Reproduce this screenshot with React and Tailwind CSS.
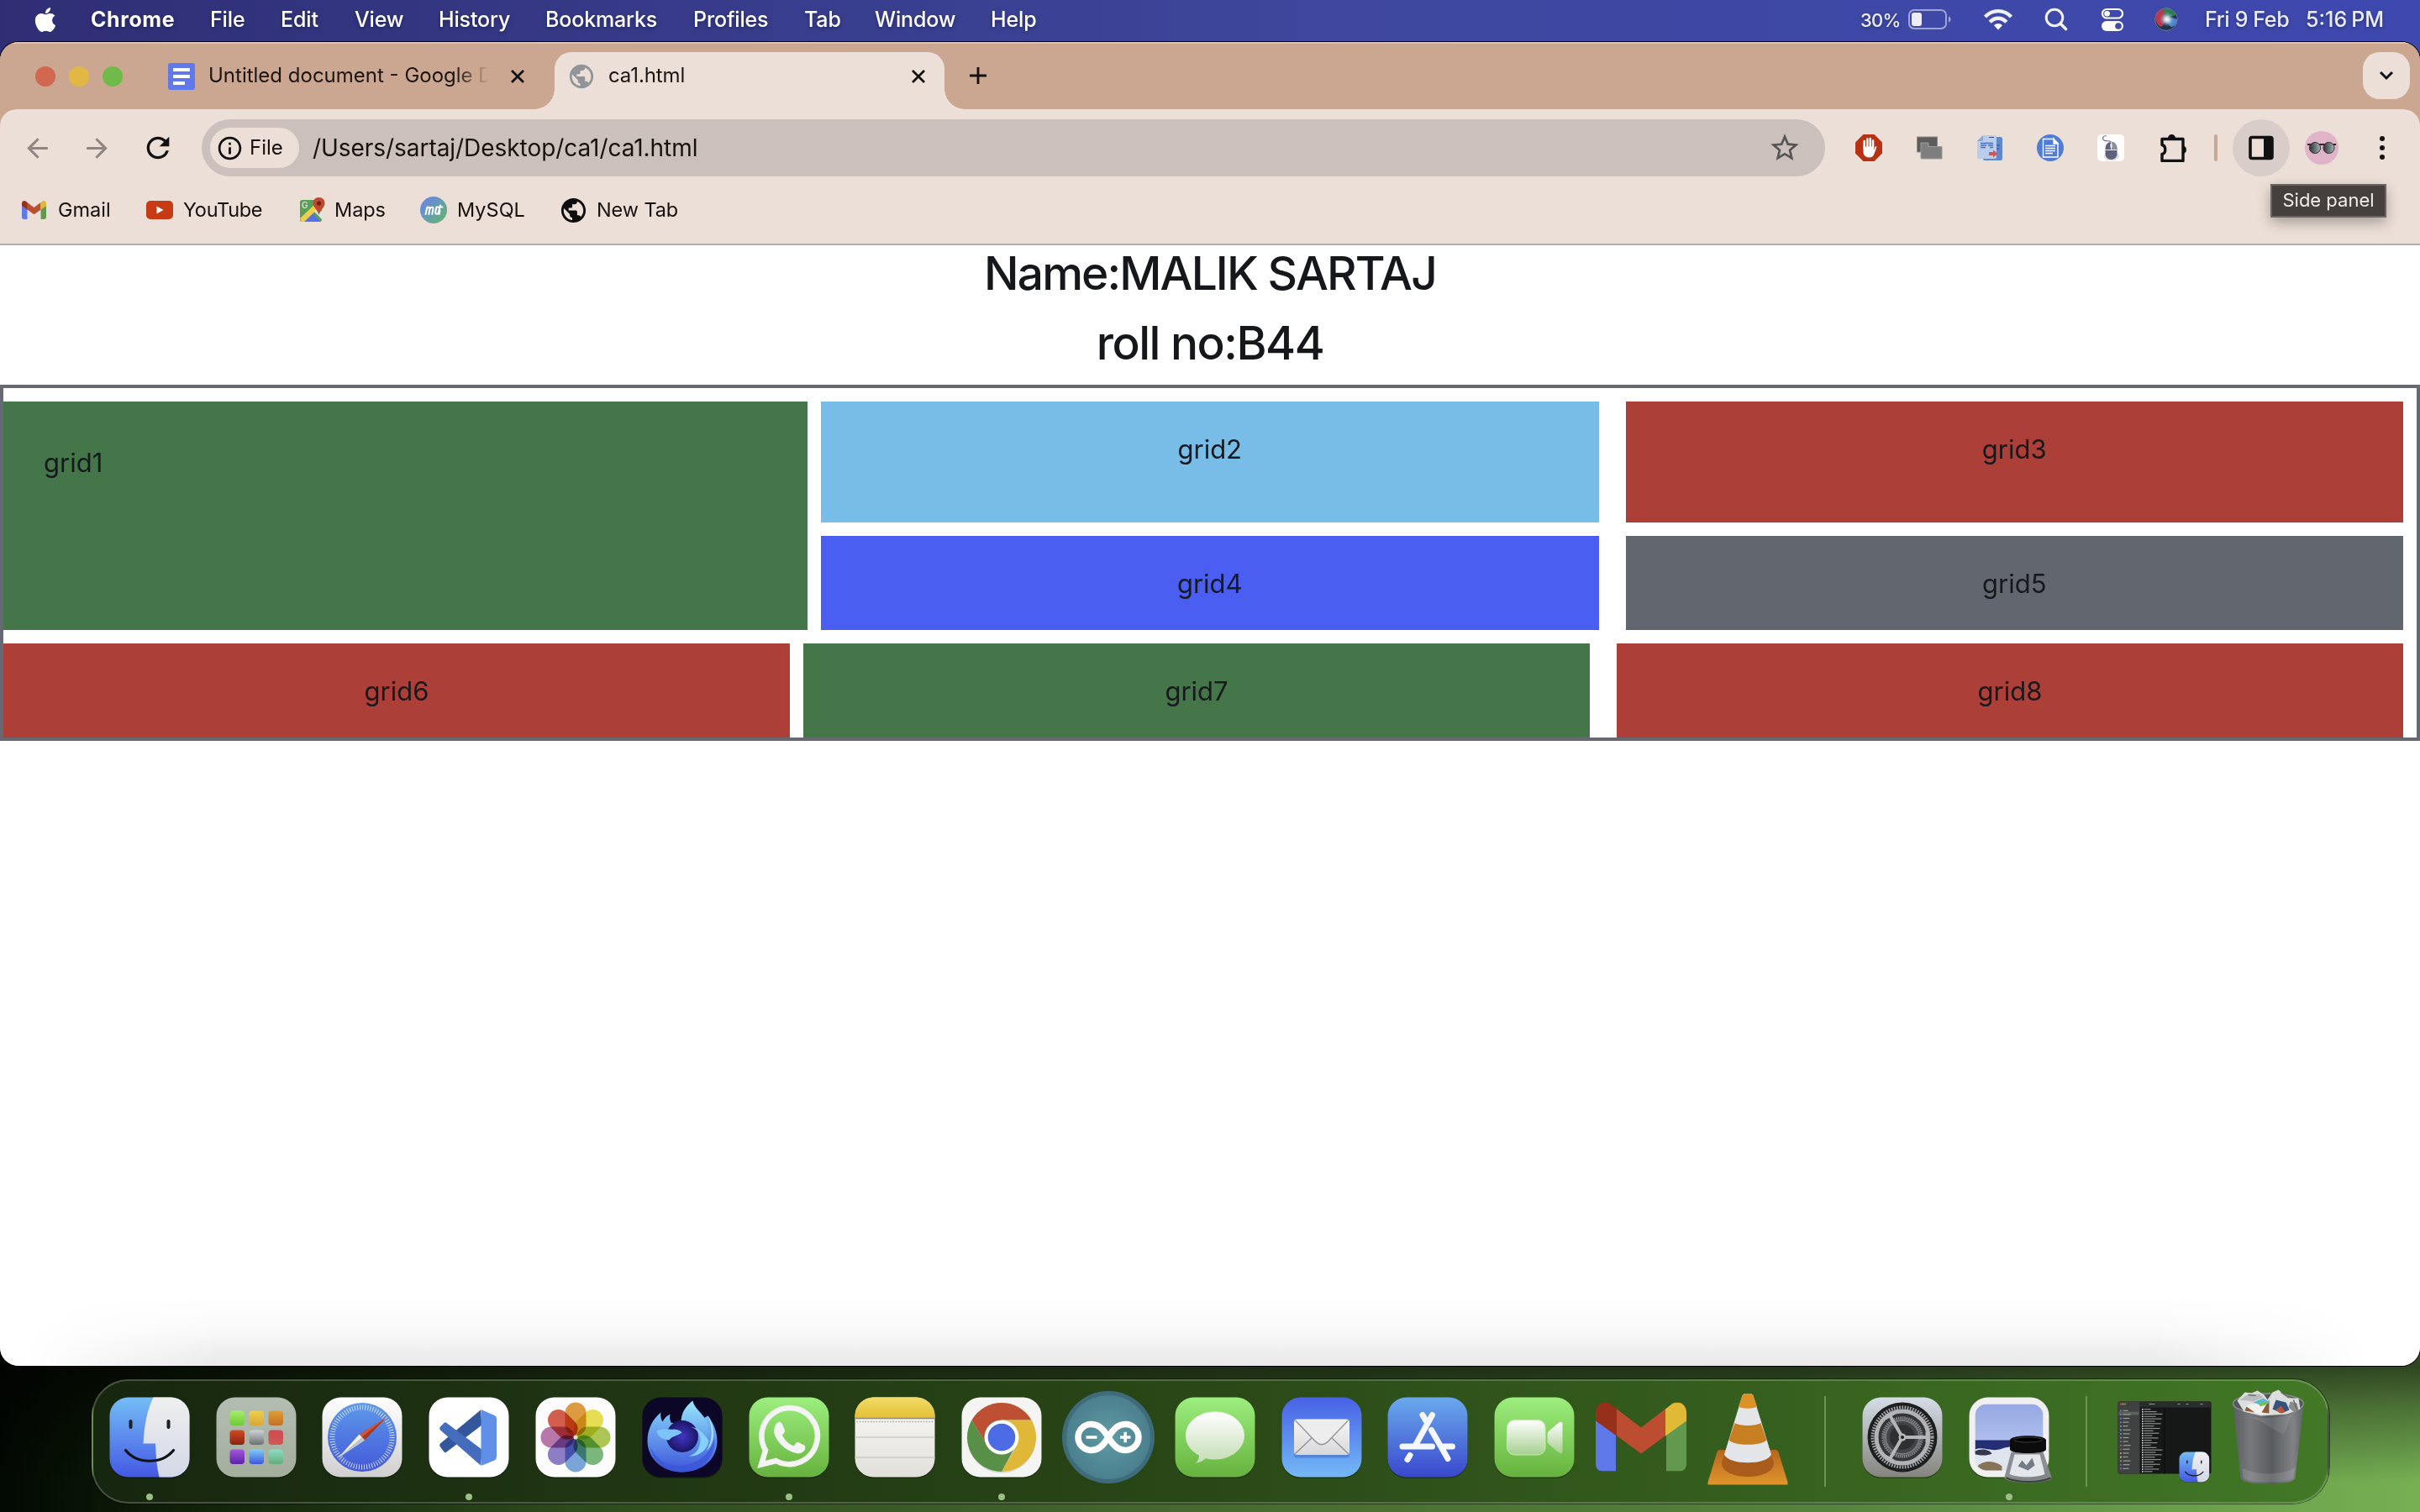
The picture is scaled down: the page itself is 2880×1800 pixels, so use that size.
import React from "react";
import { FaApple } from "react-icons/fa";
import {
  MdArrowBack,
  MdArrowForward,
  MdRefresh,
  MdInfoOutline,
  MdStarBorder,
  MdPublic,
  MdOutlineExtension,
} from "react-icons/md";

/* ---------- menu bar ---------- */

const MENUS = [
  ["File", "w-[84px]"],
  ["Edit", "w-[88px]"],
  ["View", "w-[100px]"],
  ["History", "w-[127px]"],
  ["Bookmarks", "w-[176px]"],
  ["Profiles", "w-[132px]"],
  ["Tab", "w-[84px]"],
  ["Window", "w-[138px]"],
  ["Help", "w-[60px]"],
];

function MenuBar() {
  return (
    <header className="flex h-[49px] shrink-0 items-center pb-[3px] text-[25px] font-medium leading-none text-white [text-shadow:0_2px_4px_rgba(0,0,0,0.35)]">
      <FaApple className="ml-[39px] mr-[39px] h-[33px] w-[30px]" />
      <span className="w-[142px] font-bold tracking-[0.6px]">Chrome</span>
      {MENUS.map(([label, width]) => (
        <span key={label} className={`${width} whitespace-nowrap tracking-[-0.15px]`}>
          {label}
        </span>
      ))}
      <div className="ml-auto flex items-center text-white/90">
        <span className="w-[57px] pt-[2px] text-[22px] tracking-[-0.8px]">30%</span>
        <svg className="h-[26px] w-[52px]" viewBox="0 0 52 26" fill="none">
          <rect x="1" y="2" width="44" height="22" rx="6" stroke="white" strokeOpacity=".5" strokeWidth="2" />
          <rect x="4" y="5" width="12" height="16" rx="3" fill="white" fillOpacity=".9" />
          <path d="M48 9.500c3.500 1 3.500 6 0 7z" fill="white" fillOpacity=".5" />
        </svg>
        <svg className="ml-[37px] h-[26px] w-[36px]" viewBox="0 0 36 26" fill="none" stroke="white" strokeOpacity=".92" strokeWidth="4.400">
          <path d="M2.500 10C11 .800 25 .800 33.500 10" />
          <path d="M8.200 16.200c5.500-6 14-6 19.600 0" />
          <path d="M18 25.500l-5-5.200c2.800-3 7.200-3 10 0z" fill="white" stroke="none" />
        </svg>
        <svg className="ml-[37px] h-[28px] w-[28px]" viewBox="0 0 28 28" fill="none" stroke="white" strokeOpacity=".92" strokeWidth="3" strokeLinecap="round">
          <circle cx="12" cy="12" r="9.800" />
          <path d="M19.500 19.500l6 6" strokeWidth="3.600" />
        </svg>
        <svg className="ml-[39px] h-[28px] w-[28px]" viewBox="0 0 28 28">
          <rect x="2" y="2" width="24" height="10.500" rx="5.250" fill="none" stroke="white" strokeWidth="2.200" />
          <circle cx="7.600" cy="7.250" r="3.300" fill="white" />
          <rect x="1" y="16" width="26" height="12" rx="6" fill="white" />
          <circle cx="21" cy="22" r="3.800" fill="#3f4ba8" />
        </svg>
        <svg className="ml-[35px] h-[30px] w-[30px]" viewBox="0 0 30 30">
          <defs>
            <radialGradient id="siri" cx=".53" cy=".5" r=".32">
              <stop offset="0" stopColor="#fff" />
              <stop offset=".35" stopColor="#d5e6f0" stopOpacity=".85" />
              <stop offset="1" stopColor="#5a8fb0" stopOpacity="0" />
            </radialGradient>
          </defs>
          <circle cx="15" cy="15" r="14" fill="#26364a" />
          <path d="M3 8c3-4 7-6 9-5l3 12-4 9C5 24 0 16 3 8z" fill="#b73a52" />
          <path d="M12 2c6-2 12 2 15 8-4 1-9 1-12 4-2-4-4-7-3-12z" fill="#2f7d54" />
          <path d="M15 15c4-2 9-2 13 0 0 6-4 9-7 9-3-2-5-5-6-9z" fill="#4d86cf" />
          <path d="M15 16c1 4 3 7 5 9-3 3-8 3-11 0z" fill="#1d3350" />
          <circle cx="15" cy="15" r="14" fill="url(#siri)" />
          <circle cx="15" cy="15" r="13.500" fill="none" stroke="#6c7ba8" />
        </svg>
        <span className="ml-[31px] w-[120px] whitespace-nowrap tracking-[-0.35px]">Fri 9 Feb</span>
        <span className="w-[136px] whitespace-nowrap">
          5:16<span className="ml-[5px]">PM</span>
        </span>
      </div>
    </header>
  );
}

/* ---------- browser ---------- */

const Cross = ({ className }) => (
  <svg className={`h-[18px] w-[18px] shrink-0 ${className}`} viewBox="0 0 18 18" stroke="#111" strokeWidth="2.800">
    <path d="M2 2l14 14M16 2L2 16" />
  </svg>
);

function TabStrip() {
  return (
    <div className="flex h-[80px] shrink-0 border-t-2 border-[#dcc3b5] bg-[#cba791]">
      <div className="flex h-[78px] items-center">
        <i className="ml-[42px] h-[24px] w-[24px] rounded-full bg-[#d1674f]" />
        <i className="ml-[16px] h-[24px] w-[24px] rounded-full bg-[#e1b843]" />
        <i className="ml-[16px] h-[24px] w-[24px] rounded-full bg-[#70ba4a]" />
        <svg className="ml-[54px] h-[32px] w-[32px]" viewBox="0 0 32 32">
          <rect width="32" height="32" rx="3" fill="#5f78ea" />
          <path d="M6 8h20M6 16h20M6 24h14" stroke="#fff" strokeWidth="4" />
        </svg>
        <span className="ml-[16px] w-[334px] whitespace-nowrap pb-[2px] text-[24px] text-[#1b1512] [mask-image:linear-gradient(to_right,black_88%,transparent_100%)]">
          Untitled document - Google D
        </span>
        <Cross className="ml-[25px]" />
      </div>
      <div className="mt-[10px] flex">
        <div className="ml-[11px] h-[68px] w-[24px] bg-[radial-gradient(circle_24px_at_0_44px,transparent_23.500px,#ecdfd7_24px)] [clip-path:inset(44px_0_0_0)]" />
        <div className="flex h-[68px] w-[464px] items-center rounded-t-[20px] bg-[#ecdfd7] pb-[10px]">
          <MdPublic className="ml-[15px] h-[34px] w-[34px] text-[#8f959a]" />
          <span className="ml-[15px] w-[360px] pb-[2px] text-[24px] tracking-[-0.1px] text-[#1b1512]">ca1.html</span>
          <Cross />
        </div>
        <div className="h-[68px] w-[24px] bg-[radial-gradient(circle_24px_at_24px_44px,transparent_23.500px,#ecdfd7_24px)] [clip-path:inset(44px_0_0_0)]" />
      </div>
      <svg className="ml-[6px] mt-[28px] h-[20px] w-[20px]" viewBox="0 0 20 20" stroke="#15110f" strokeWidth="2.800">
        <path d="M10 0v20M0 10h20" />
      </svg>
      <div className="ml-auto mr-[12px] mt-[10px] flex h-[56px] w-[56px] items-center justify-center rounded-[20px] bg-[#ecdfd7]">
        <svg className="h-[12px] w-[18px]" viewBox="0 0 18 12" fill="none" stroke="#111" strokeWidth="3">
          <path d="M2 2l7 7 7-7" />
        </svg>
      </div>
    </div>
  );
}

function Extensions() {
  return (
    <div className="flex h-[68px] items-center">
      <svg className="ml-[36px] h-[32px] w-[32px]" viewBox="0 0 32 32">
        <path d="M9.500 0h13L32 9.500v13L22.500 32h-13L0 22.500v-13z" fill="#b53213" />
        <path d="M10.700 17V8M14.300 15V5.500M17.700 15V5M21 16V7.500" stroke="#fff" strokeWidth="2.500" strokeLinecap="round" />
        <path d="M9.500 14.500h12.700v4l1-3c.6-1.800 2.600-1.500 2 .3L22.500 23c-1 3-3 4.500-6.200 4.500-4.500 0-6.800-3-6.800-7z" fill="#fff" />
      </svg>
      <svg className="ml-[41px] h-[28px] w-[31px]" viewBox="0 0 31 28">
        <rect x=".5" y="1" width="24" height="18" fill="#5c5c5c" stroke="#8b8b8b" />
        <path d="M5 8h9v4.500h16V27H5z" fill="#7e7e7e" stroke="#9c9c9c" />
      </svg>
      <svg className="ml-[41px] h-[30px] w-[30px]" viewBox="0 0 30 30">
        <rect x="7" y="2" width="23" height="28" rx="2" fill="#6089cd" />
        <path d="M7 0h14a2 2 0 012 2v24a2 2 0 01-2 2H2a2 2 0 01-2-2V7z" fill="#b9cdec" />
        <path d="M0 7L7 0v5a2 2 0 01-2 2z" fill="#86a7dc" />
        <path d="M4 9.500h15M4 12h7m2 0h6M4 14.500h6m5 0h4" stroke="#4a6fbd" strokeWidth="1.300" />
        <path d="M23 12h4m-4 4h3M14 2.500h6" stroke="#2d508f" strokeWidth="1.200" />
        <path d="M14 20h5v-2.500l5.500 4.500-5.500 4.500V24h-5z" fill="#c85a59" />
      </svg>
      <svg className="ml-[41px] h-[32px] w-[32px]" viewBox="0 0 32 32">
        <circle cx="16" cy="16" r="16" fill="#507cd4" />
        <path d="M7.500 5.500h12.500l5 5v16.500h-17.500z" fill="none" stroke="#fff" strokeWidth="1.400" />
        <path d="M20 5v6h5zM10 13.500h12M10 16.500h12M10 19.500h12M10 22.500h9" fill="#fff" stroke="#fff" strokeWidth="1.400" />
      </svg>
      <svg className="ml-[40px] h-[32px] w-[32px]" viewBox="0 0 32 32">
        <rect width="32" height="32" rx="5" fill="#fdfdfd" />
        <ellipse cx="17" cy="26" rx="9" ry="5" fill="#dcdce0" />
        <path d="M11 2c-4-1-6 3-3 5s8-1 9 3" fill="none" stroke="#6c6f82" strokeWidth="1.100" />
        <path d="M9.500 18c0-6 3-9 7-9s7 3 7 9v5c0 4-3 7-7 7s-7-3-7-7z" fill="#5d617d" />
        <path d="M17 9c4 0 6.500 3 6.500 9H17z" fill="#8d8f9f" />
        <path d="M16.500 9v10M9.500 18.500h14" stroke="#e8e8ee" strokeWidth="1" />
        <rect x="15.500" y="11" width="2" height="5" rx="1" fill="#fff" />
      </svg>
      <svg className="ml-[41px] h-[34px] w-[34px]" viewBox="0 0 34 34">
        <path d="M4 6.500h25v26H4v-8c5-1 5-10 0-11z" fill="none" stroke="#111" strokeWidth="3.400" strokeLinejoin="round" />
        <path d="M11 5.500a4.500 4.500 0 019 0zM29.500 14.500a5 5 0 010 9.500z" fill="#111" />
      </svg>
      <i className="ml-[32px] h-[32px] w-[4px] rounded-full bg-[#cba791]" />
      <div className="relative ml-[18px] flex h-[68px] w-[68px] items-center justify-center rounded-full bg-[#d9cdc9]">
        <svg className="h-[30px] w-[30px]" viewBox="0 0 30 30">
          <rect x="2" y="2.500" width="26" height="25" rx="2" fill="#ecdfd7" stroke="#111" strokeWidth="3.600" />
          <path d="M18 2h10v26H18z" fill="#111" />
        </svg>
        <div className="absolute left-[45px] top-[77px] z-10 flex h-[40px] w-[138px] items-center justify-center border-2 border-[#6b6462] bg-[#453f3e] pb-[2px] text-[22px] text-[#f1ecea] shadow-[0_6px_16px_rgba(0,0,0,0.3)]">
          <span className="whitespace-nowrap">Side panel</span>
        </div>
      </div>
      <svg className="ml-[18px] h-[40px] w-[40px]" viewBox="0 0 40 40">
        <defs>
          <linearGradient id="lens" x1="0" x2="1">
            <stop offset="0" stopColor="#2a2f33" />
            <stop offset="1" stopColor="#a9b3b6" />
          </linearGradient>
        </defs>
        <circle cx="20" cy="20" r="20" fill="#e0b4c8" />
        <path d="M3 16h34" stroke="#2c2526" strokeWidth="2" />
        <ellipse cx="12" cy="20" rx="6.600" ry="6.600" fill="url(#lens)" stroke="#3a3436" />
        <ellipse cx="28.500" cy="20" rx="6.600" ry="6.600" fill="url(#lens)" stroke="#3a3436" />
      </svg>
      <svg className="ml-[49px] mr-[40px] h-[28px] w-[6px]" viewBox="0 0 6 28" fill="#111">
        <circle cx="3" cy="3" r="3" />
        <circle cx="3" cy="14" r="3" />
        <circle cx="3" cy="25" r="3" />
      </svg>
    </div>
  );
}

function AddressRow() {
  return (
    <div className="flex h-[68px] items-center">
      <MdArrowBack className="ml-[26px] h-[37px] w-[37px] text-[#8e8681]" />
      <MdArrowForward className="ml-[34px] h-[37px] w-[37px] text-[#8e8681]" />
      <MdRefresh className="ml-[34px] h-[40px] w-[40px] text-[#111]" />
      <div className="ml-[32px] flex h-[68px] w-[1932px] items-center rounded-full bg-[#cbc0bb]">
        <div className="ml-[10px] flex h-[48px] w-[106px] items-center rounded-full bg-[#ecdfd7] text-[24px]">
          <MdInfoOutline className="ml-[7px] h-[33px] w-[33px] text-[#111]" />
          <span className="ml-[7px] pb-px text-[#16110f]">File</span>
        </div>
        <span className="ml-[16px] text-[28px] tracking-[-0.05px] text-[#16110f]">/Users/sartaj/Desktop/ca1/ca1.html</span>
        <MdStarBorder className="ml-auto mr-[28px] h-[40px] w-[40px] text-[#555]" />
      </div>
      <Extensions />
    </div>
  );
}

const GmailMark = ({ className }) => (
  <svg className={className} viewBox="0 0 108 82" preserveAspectRatio="none">
    <path d="M0 21l24 17v44H8a8 8 0 01-8-8z" fill="#5f78ea" />
    <path d="M108 21L84 38v44h16a8 8 0 008-8z" fill="#62994f" />
    <path d="M24 7l30 23L84 7v32L54 61 24 39z" fill="#bd4d30" />
    <path d="M0 22V12C0 1 12-4 20 4l5 4v32z" fill="#97301a" />
    <path d="M108 22V12c0-11-12-16-20-8l-5 4v32z" fill="#e0b936" />
  </svg>
);

function Bookmarks() {
  return (
    <div className="flex h-[62px] items-center text-[23.500px] text-[#16110f]">
      <GmailMark className="ml-[26px] h-[22px] w-[29px]" />
      <span className="ml-[14px] w-[105px]">Gmail</span>
      <svg className="h-[22px] w-[32px]" viewBox="0 0 32 22">
        <rect width="32" height="22" rx="5" fill="#c83a14" />
        <path d="M12.500 6.500v9l8-4.500z" fill="#fff" />
      </svg>
      <span className="ml-[12px] w-[139px] tracking-[-0.3px]">YouTube</span>
      <svg className="h-[30px] w-[30px]" viewBox="0 0 30 30">
        <rect y="3" width="26" height="26" rx="3" fill="#5b9e55" />
        <path d="M13 17l12 12H4z" fill="#5572e6" />
        <path d="M0 25L18 8l5 4L5 29H2z" fill="#f0d04a" />
        <path d="M17 17l9 9v-9l-5-4z" fill="#dfe3e6" />
        <text x="2" y="13" fontSize="10" fontFamily="Inter" fill="#fff">G</text>
        <path d="M22.500 0c4.500 0 7 3 7 7 0 5-5 7-7 14-2-7-7-9-7-14 0-4 2.500-7 7-7z" fill="#c1482f" />
        <circle cx="22.500" cy="7" r="2.600" fill="#6e2116" />
      </svg>
      <span className="ml-[11px] w-[102px] tracking-[-0.1px]">Maps</span>
      <svg className="h-[32px] w-[32px]" viewBox="0 0 32 32">
        <defs>
          <linearGradient id="mysql" x1="0" y1="0" x2="1" y2="1">
            <stop offset=".1" stopColor="#6a86ea" />
            <stop offset="1" stopColor="#62b863" />
          </linearGradient>
        </defs>
        <circle cx="16" cy="16" r="16" fill="url(#mysql)" />
        <path d="M6.500 21l2-8.500M8 14.500c1.500-2.500 4-2.500 3.500 0L10.300 21M11.500 14.500c1.500-2.500 4.500-2.500 4 0L14.300 21M19.500 12.500l-1.200 5.500c-.6 3.500 2.700 3.500 3.700.5l2-8M21 12.500h5.500M23.500 17l-.9 4" fill="none" stroke="#fff" strokeWidth="2" strokeLinecap="round" strokeLinejoin="round" />
      </svg>
      <span className="ml-[12px] w-[121px]">MySQL</span>
      <MdPublic className="h-[35px] w-[35px] text-[#0d0d0d]" />
      <span className="ml-[10px] tracking-[-0.1px]">New Tab</span>
    </div>
  );
}

const Cell = ({ children, className }) => (
  <div className={`text-[31px] leading-[50px] text-[#17191d] ${className}`}>{children}</div>
);

const Heading = ({ children, className }) => (
  <h1 className={`h-[67px] text-center text-[55px] font-medium leading-[67px] text-[#15171b] ${className}`}>
    {children}
  </h1>
);

function Page() {
  return (
    <main className="flex flex-1 flex-col bg-white">
      <Heading className="tracking-[-1.900px]">Name:MALIK SARTAJ</Heading>
      <Heading className="mt-[16px] tracking-[-1.500px]">roll no:B44</Heading>
      <section className="mt-[16px] flex h-[424px] flex-col gap-[16px] border-4 border-[#666872] pr-[16px] pt-[16px] text-center">
        <div className="flex h-[272px] gap-[16px]">
          <Cell className="w-[957px] bg-[#45764a] p-[48px] text-left">grid1</Cell>
          <div className="grid flex-1 grid-cols-2 grid-rows-[144px_112px] gap-x-[32px] gap-y-[16px]">
            <Cell className="bg-[#78bce8] p-[32px] pb-0">grid2</Cell>
            <Cell className="bg-[#ac4039] p-[32px] pb-0">grid3</Cell>
            <Cell className="bg-[#4a5ff1] p-[32px] pb-0">grid4</Cell>
            <Cell className="bg-[#61666f] p-[32px] pb-0">grid5</Cell>
          </div>
        </div>
        <div className="flex h-[112px]">
          <Cell className="w-[936px] bg-[#ac4039] p-[32px] pb-0">grid6</Cell>
          <Cell className="ml-[16px] w-[936px] bg-[#45764a] p-[32px] pb-0">grid7</Cell>
          <Cell className="ml-[32px] w-[936px] bg-[#ac4039] p-[32px] pb-0">grid8</Cell>
        </div>
      </section>
      <div className="mt-auto h-[84px] bg-linear-to-b from-transparent via-[#f9f9f9] to-[#e8e8e8] [mask-image:linear-gradient(to_right,transparent_30px,black_260px,black_2560px,transparent_2820px)]" />
    </main>
  );
}

/* ---------- dock ---------- */

const Icon = ({ children, dot }) => (
  <div className="flex w-[126.800px] shrink-0 flex-col items-center">
    <svg className="h-[110px] w-[110px] overflow-visible" viewBox="-7.500 -7.500 110 110">
      {children}
    </svg>
    {dot && <i className="mt-[12px] h-[8px] w-[8px] rounded-full bg-[#9cbf86]" />}
  </div>
);

const Tile = ({ fill }) => (
  <g>
    <rect y="1.500" width="95" height="95" rx="22" fill="#000" opacity=".3" />
    <rect width="95" height="95" rx="22" fill={fill} />
  </g>
);

const Grad = ({ id, from, to }) => (
  <linearGradient id={id} x1="0" y1="0" x2="0" y2="1">
    <stop offset="0" stopColor={from} />
    <stop offset="1" stopColor={to} />
  </linearGradient>
);

const FinderFace = () => (
  <g>
    <Tile fill="url(#finderBlue)" />
    <path d="M52 0h21a22 22 0 0122 22v51a22 22 0 01-22 22H59c-3-12-4-26-4.500-40H40C41 33 45 14 52 0z" fill="url(#finderWhite)" />
    <path d="M25 28.500v7M70 28.500v7" stroke="#1b1f26" strokeWidth="4" strokeLinecap="round" />
    <path d="M19 63c14 17 43 17 57 0" fill="none" stroke="#101418" strokeWidth="3.200" strokeLinecap="round" />
  </g>
);

const PAD = [
  ["#a6ee6c", "#6fc936"],
  ["#ecd04c", "#dca636"],
  ["#dfa035", "#c46f24"],
  ["#cf4a24", "#8a2410"],
  ["#cfd4d9", "#6c6e70"],
  ["#cf4a50", "#cf5a55"],
  ["#a455dd", "#5e22a8"],
  ["#7ccdf8", "#3d55e0"],
  ["#8fdcc8", "#63ad78"],
];

const PETALS = ["#dc8f28", "#e6dc3c", "#a3c23f", "#68b06c", "#6a9bd8", "#7e6cc0", "#b1659f", "#cf4a36"];

const Gear = () => (
  <g>
    <Tile fill="url(#setBg)" />
    <circle cx="47.500" cy="47.500" r="41.500" fill="#1d1e20" />
    <circle cx="47.500" cy="47.500" r="35.500" fill="none" stroke="#a4a6a8" strokeWidth="4" strokeDasharray="1.700 1.500" />
    <circle cx="47.500" cy="47.500" r="31" fill="#343537" stroke="#b0b2b4" strokeWidth="5" />
    <circle cx="47.500" cy="47.500" r="23" fill="#48494b" stroke="#85878a" strokeWidth="3.500" strokeDasharray="1.500 1" />
    <circle cx="47.500" cy="47.500" r="20" fill="#434446" stroke="#77797b" strokeWidth="2" />
    <circle cx="47.500" cy="47.500" r="15" fill="#2f3032" />
    <path d="M47.500 47.500H78M47.500 47.500L32.500 21.500M47.500 47.500L32.500 73.500" stroke="#b4b6b8" strokeWidth="4" />
    <path d="M77 41.500v12M27 25l10-6M27 70l10 6" stroke="#b4b6b8" strokeWidth="4" />
    <circle cx="47.500" cy="47.500" r="4.500" fill="#b4b6b8" />
    <circle cx="47.500" cy="47.500" r="2" fill="#222" />
  </g>
);

const SIDE_COLORS = ["#4b83d8", "#4b83d8", "#4b83d8", "#4b83d8", "#4ba8c8", "#4ba8c8", "#4ba8c8", "#4ba8c8", "#777", "#777", "#d2493d", "#df9a35", "#dcc93b", "#5cb650", "#4b73d8", "#a05bc8"];

function DockDefs() {
  return (
    <svg className="absolute h-0 w-0">
      <defs>
        <Grad id="finderBlue" from="#74bdf6" to="#4459e4" />
        <Grad id="finderWhite" from="#efeff0" to="#d2d8e6" />
        <Grad id="padBg" from="#b4bdb2" to="#a3ae9d" />
        <Grad id="safBg" from="#ffffff" to="#cfcfcf" />
        <Grad id="safDial" from="#5d9ae9" to="#4458da" />
        <Grad id="waBg" from="#9cee7e" to="#67b23e" />
        <Grad id="noteTop" from="#f1dc68" to="#e4bf33" />
        <Grad id="noteBody" from="#fafaf8" to="#e1dfda" />
        <Grad id="mailBg" from="#4861e5" to="#74b9f6" />
        <Grad id="storeBg" from="#6aa9ec" to="#3948cd" />
        <Grad id="bubble" from="#ffffff" to="#c4dcb5" />
        <Grad id="camera" from="#ffffff" to="#a7cf8f" />
        <Grad id="envelope" from="#f6f6f6" to="#d8d8da" />
        <Grad id="setBg" from="#d5dde5" to="#85847f" />
        <Grad id="foxBody" from="#7cc6f6" to="#3f55dc" />
        <Grad id="foxFlame" from="#9be7fd" to="#4f86e6" />
        <Grad id="sky" from="#96a8e2" to="#b0c0ef" />
        <radialGradient id="foxOrb">
          <stop offset="0" stopColor="#4136c4" />
          <stop offset="1" stopColor="#1c1566" />
        </radialGradient>
        <radialGradient id="ardu">
          <stop offset="0" stopColor="#5f9ca6" />
          <stop offset="1" stopColor="#4b7f8d" />
        </radialGradient>
        <linearGradient id="bin" x1="0" x2="1">
          <stop offset="0" stopColor="#5b5e61" />
          <stop offset=".25" stopColor="#77797c" />
          <stop offset=".55" stopColor="#595c5f" />
          <stop offset=".85" stopColor="#808285" />
          <stop offset="1" stopColor="#616467" />
        </linearGradient>
        <linearGradient id="coneBase" x1="0" y1="0" x2="0" y2="1">
          <stop offset="0" stopColor="#b5661d" />
          <stop offset="1" stopColor="#e0952c" />
        </linearGradient>
        {PAD.map(([from, to], i) => (
          <Grad key={from + i} id={`pad${i}`} from={from} to={to} />
        ))}
      </defs>
    </svg>
  );
}

const Separator = ({ className }) => (
  <div className={`flex shrink-0 justify-center pt-[6px] ${className}`}>
    <i className="h-[108px] w-[2px] bg-[#6b944e]" />
  </div>
);

function Dock() {
  return (
    <div className="ml-[109px] mt-[16px] flex h-[148px] w-[2663px] rounded-[44px] border-2 border-white/20 bg-linear-to-r from-[#17260f] via-[#2a4817] to-[#427826] pl-[3.400px] pt-[12px] shadow-[0_0_0_1px_rgba(0,0,0,0.45)]">
      <Icon dot>
        <FinderFace />
      </Icon>
      <Icon>
        <Tile fill="url(#padBg)" />
        {PAD.map((_, i) => (
          <rect key={i} x={16 + (i % 3) * 23} y={16 + Math.floor(i / 3) * 23} width="17.500" height="17.500" rx="4" fill={`url(#pad${i})`} />
        ))}
      </Icon>
      <Icon>
        <Tile fill="url(#safBg)" />
        <circle cx="47.500" cy="47.500" r="41" fill="url(#safDial)" />
        <circle cx="47.500" cy="47.500" r="35.500" fill="none" stroke="#dfe9fa" strokeWidth="6" strokeDasharray=".9 2.198" />
        <path d="M76 24L44 44l6.500 7z" fill="#d0553a" />
        <path d="M76 24L47.200 47.500l3.300 3.500z" fill="#a8391f" />
        <path d="M19 72l25-28 6.500 7z" fill="#f3f3f3" />
        <path d="M19 72l28.200-24.500 3.300 3.500z" fill="#bfc3ca" />
      </Icon>
      <Icon dot>
        <Tile fill="#fff" />
        <path d="M13.500 59c-1-1-1-3 0-4L61.500 15l1.500 18-42 32c-1 1-2 .8-3 0z" fill="#34569c" />
        <path d="M13.500 35c-1 1-1 3 0 4l48 42 2-18.500L21 30.500c-1-1-2-.8-3 0z" fill="#456dbd" />
        <path d="M62 14.500l16 7q2.500 1 2.500 4v45q0 3-2.500 4.500L62 81.500z" fill="#5f8fe8" />
      </Icon>
      <Icon>
        <Tile fill="#fcfcfc" />
        {PETALS.map((color, i) => (
          <rect key={color} x="35" y="6" width="25" height="40" rx="12.500" fill={color} opacity=".88" transform={`rotate(${i * 45} 47.500 47.500)`} className="mix-blend-multiply" />
        ))}
        <circle cx="47.500" cy="47.500" r="2.500" fill="#e8e0c8" />
      </Icon>
      <Icon>
        <Tile fill="#0d0727" />
        <path d="M22 18c-1 6 1 9 2 11 2-4 5-7 9-9-1 4 0 7 1 10l22 4 22-12c6 8 11 18 11 30 0 22-18 37-42 37S6 72 6 52c0-14 6-26 16-34z" fill="url(#foxBody)" />
        <path d="M10 60c8 18 26 24 42 20 18-3 30-16 34-32 2 22-16 41-39 41C26 89 12 76 10 60z" fill="#3a56d6" opacity=".75" />
        <path d="M60 4c2 12 18 16 19 36 1 14-6 21-14 24-2-14-6-30-19-34 0-12 6-20 14-26z" fill="url(#foxFlame)" />
        <circle cx="47.500" cy="46.500" r="19" fill="url(#foxOrb)" />
        <path d="M17 40c8-4 16-1 20-2 4 0 8 1 10 4-5 4-12 4-15 9-8-1-14-4-15-11z" fill="#7cc4f5" />
        <path d="M57 35c11 3 15 14 10 25-2 5-6 8-12 10 12 1 22-7 24-18-5-9-13-16-22-17z" fill="#86cffa" />
        <path d="M78 22c6 14 6 30-2 42 10-8 12-28 2-42z" fill="#a8ddfa" />
      </Icon>
      <Icon dot>
        <Tile fill="url(#waBg)" />
        <path d="M48 12.500a33.500 33.500 0 11-16 63L14.500 80l5-17A33.500 33.500 0 0148 12.500z" fill="none" stroke="#f4f4f4" strokeWidth="6.500" />
        <path d="M34 30c1.500-1 4-1 5 1l3.500 8c.5 1.500 0 2.500-3 6 3 6 7 10 13.500 13 3.500-4.500 4-5 5.500-4.500l7.500 3.800c1.500.7 1 3.700.3 5.200-2 3.500-6.300 5-10.300 4-13-3-23-13.500-26-23-1.200-5 .5-11 4-13.500z" fill="#f4f4f4" />
      </Icon>
      <Icon>
        <Tile fill="url(#noteBody)" />
        <path d="M0 25v-3A22 22 0 0122 0h51a22 22 0 0122 22v3z" fill="url(#noteTop)" />
        <path d="M0 25h95" stroke="#8d8a80" strokeWidth="1.600" />
        <path d="M2 29h91" stroke="#a9a9a9" strokeWidth="1.600" strokeDasharray="1.600 1.700" />
        <path d="M0 47.500h95M0 71.500h95" stroke="#c9c9c9" strokeWidth="1.600" />
      </Icon>
      <Icon dot>
        <Tile fill="#f4f4f3" />
        <circle cx="47.500" cy="49" r="41" fill="#000" opacity=".12" />
        <path d="M12 27A41 41 0 0147.500 6.500 41 41 0 0183 27H47.500v20.500L30 57z" fill="#bd4f33" />
        <path d="M83 27a41 41 0 01-35.500 61.500L66 57l1-10-6-13-13.500-7z" fill="#e1b738" />
        <path d="M12 27a41 41 0 0035.500 61.500L64 58l-16.500 9L30 57z" fill="#589048" />
        <circle cx="47.500" cy="47.500" r="20.500" fill="#fff" />
        <circle cx="47.500" cy="47.500" r="16.300" fill="#4c6be4" />
      </Icon>
      <Icon>
        <circle cx="47.500" cy="47.500" r="55" fill="#3e6c7a" />
        <circle cx="47.500" cy="47.500" r="50" fill="url(#ardu)" />
        <path d="M47.500 47.500C40 35 34 32 27 32a15.500 15.500 0 000 31c7 0 13-3 20.500-15.500C55 35 61 32 68 32a15.500 15.500 0 010 31c-7 0-13-3-20.500-15.500z" fill="none" stroke="#fff" strokeWidth="7.500" />
        <path d="M21 47.500h13M61.500 47.500h12.500M67.700 41.300v12.400" stroke="#fff" strokeWidth="3.600" />
      </Icon>
      <Icon>
        <Tile fill="url(#waBg)" />
        <path d="M47.500 17c20 0 35 13 35 28.500S67 74 47.500 74c-4 0-8-.5-11-1.500-3 3-7 5-12 6 3-3 4-6 4-9.500C18 64 12.500 55 12.500 45.500 12.500 30 27.500 17 47.500 17z" fill="url(#bubble)" />
      </Icon>
      <Icon>
        <Tile fill="url(#mailBg)" />
        <rect x="14.500" y="28" width="66" height="44" rx="4" fill="#2b4fa0" opacity=".35" />
        <rect x="14.500" y="26" width="66" height="42.500" rx="4" fill="url(#envelope)" />
        <path d="M16 67l20-19M79 67L59 48" stroke="#8d8d92" strokeWidth="1.200" />
        <path d="M16 27.500l24 25c5 5 10 5 15 0l24-25" fill="#ededed" stroke="#96969b" strokeWidth="1.400" />
      </Icon>
      <Icon>
        <Tile fill="url(#storeBg)" />
        <g stroke="#f4f7fd" strokeWidth="7" strokeLinecap="round">
          <path d="M53 21L33 57M41.500 21l4 7M52 39l19.500 34M26.500 69l-3 5M17.500 58.500H53M67 58.500h10" />
        </g>
      </Icon>
      <Icon>
        <Tile fill="url(#waBg)" />
        <rect x="15" y="27" width="45.500" height="41.500" rx="9" fill="url(#camera)" stroke="#c9eab4" />
        <path d="M63 44c0-2 1-3.500 3-5l10-8.500c2.500-2 5-1.500 5 1v33c0 2.500-2.500 3-5 1l-10-8.500c-2-1.500-3-3-3-5z" fill="url(#camera)" />
      </Icon>
      <Icon>
        <svg x="-7" y="6" width="109" height="82" viewBox="0 0 108 82">
          <path d="M0 21l24 17v44H8a8 8 0 01-8-8z" fill="#5f78ea" />
          <path d="M108 21L84 38v44h16a8 8 0 008-8z" fill="#62994f" />
          <path d="M24 7l30 23L84 7v32L54 61 24 39z" fill="#bd4d30" />
          <path d="M0 22V12C0 1 12-4 20 4l5 4v32z" fill="#97301a" />
          <path d="M108 22V12c0-11-12-16-20-8l-5 4v32z" fill="#e0b936" />
        </svg>
      </Icon>
      <Icon>
        <path d="M11 65q.5-2.500 3-2.500h67q2.500 0 3 2.500l11 36v3H0v-3z" fill="url(#coneBase)" />
        <path d="M16.500 78c0 22 62 22 62 0l-4-14H20.500z" fill="#a95c1b" />
        <path d="M41-2q1-2.500 3.500-2.500h6Q53-4.500 54-2l21.500 70c-5 13-51 13-56 0z" fill="#e4e5e8" />
        <path d="M41-2q1-2.500 3.500-2.500h6Q53-4.500 54-2l4.500 13c-5 3-17 3-22 0z" fill="#dd9227" />
        <path d="M32 30.500c6 4 25 4 31 0L70 51c-7 7-38 7-45 0z" fill="#c87f22" />
      </Icon>
      <Separator className="w-[57.200px]" />
      <Icon>
        <Gear />
      </Icon>
      <Icon dot>
        <Tile fill="#f0f0f0" />
        <clipPath id="photo">
          <rect x="7" y="8" width="81" height="79" rx="14" />
        </clipPath>
        <g clipPath="url(#photo)">
          <path d="M7 8h81v48H7z" fill="url(#sky)" />
          <path d="M7 51h81v16H7z" fill="#252e73" />
          <path d="M7 62c10-4 20 4 32-1s30 0 49-2v30H7z" fill="#dfe5ee" />
          <path d="M7 64c6-3 16-3 20 3-6 3-14 2-20 1z" fill="#33384c" />
          <path d="M8 84c8-10 22-9 31-2v7H10z" fill="#857458" />
        </g>
        <path d="M50 65h38l10 30c3 9-57 9-56 0z" fill="#85898c" opacity=".95" />
        <path d="M54 68h30l6 23c-6 5-36 5-42 0z" fill="#e3e6ea" />
        <path d="M58 82l5-7 5 6 7-9 3 9-8 6z" fill="#737a88" />
        <path d="M44 96c14 6 40 6 53 0" fill="none" stroke="#3e4042" strokeWidth="2" />
        <path d="M48.500 51c0-7 43-7 43 0v11c0 6-43 6-43 0z" fill="#0c0c0c" />
        <ellipse cx="70" cy="50.500" rx="17" ry="3" fill="#000" stroke="#3b3b3b" />
      </Icon>
      <Separator className="w-[58.200px]" />
      <Icon>
        <rect x="-8" y="5" width="111" height="86" rx="2" fill="#161817" />
        <path d="M-8 7q0-2 2-2h24v86H-6q-2 0-2-2z" fill="#3f4240" />
        <path d="M18 5h83q2 0 2 2v5H18z" fill="#2a2d2b" />
        <path d="M-7 17h24v4H-7z" fill="#5c605d" />
        <circle cx="-4.500" cy="8" r="1" fill="#d85847" />
        <circle cx="-2" cy="8" r="1" fill="#dfae40" />
        <circle cx=".5" cy="8" r="1" fill="#60b84d" />
        <path d="M29 8h7M63 8h3M73 8h3M90 8h3" stroke="#999" strokeWidth="1.200" />
        {SIDE_COLORS.map((color, i) => (
          <g key={i}>
            <rect x="-5.500" y={15 + i * 4.600} width="1.800" height="1.800" fill={color} />
            <rect x="-2" y={15.200 + i * 4.600} width={6 + ((i * 3) % 4)} height="1.200" fill="#9b9e9c" />
          </g>
        ))}
        {Array.from({ length: 27 }, (_, i) => (
          <g key={i}>
            <rect x="20.500" y={13.500 + i * 2.850} width="1.600" height="1.600" fill="#e2e2e2" />
            <rect x="23" y={13.600 + i * 2.850} width={8 + ((i * 7) % 15)} height="1.200" fill="#8c8f8d" />
          </g>
        ))}
        <path d="M47.500 12v79" stroke="#090909" />
        <g transform="translate(65 65) scale(.375)">
          <FinderFace />
        </g>
      </Icon>
      <Icon>
        <g transform="translate(-3 0)">
          <path d="M6 7h84l-10 89q-2 7-32 7t-33-7z" fill="url(#bin)" />
          <ellipse cx="48" cy="7.500" rx="42" ry="12" fill="#55595b" stroke="#898c8e" strokeWidth="1.500" />
          <path d="M11 4l9-10 8 1 7-3 8 5 4 6 6-9 7-3 7 6 8 4 9 0 2 13-16 6-31 2-20-5z" fill="#dcdddd" />
          <path d="M14 3l9-6 14-1 5 4-12 5z" fill="#b9bbbc" />
          <path d="M20 12l6-4 22 0 3 11-12 1-14-3z" fill="#f1f1f0" />
          <path d="M22 11l10 7-12-2zM40 18l9-15 0 16z" fill="#8d5a35" />
          <path d="M30 6l12-5 8 5-7 4z" fill="#58b9d3" />
          <path d="M36 8l9-3 2 2-8 4z" fill="#7ac143" />
          <path d="M53 14l4-11 12 3 4 9-9 4z" fill="#35517f" />
          <path d="M57 15l6-5 5 7-6 2z" fill="#bb5530" />
          <path d="M74 5l8 2 2 8-5 3-7-6z" fill="#8b8b89" />
          <path d="M24-3l9 1M63-6l10 7M78 3l4 12" stroke="#6b6d6e" strokeWidth="1.500" />
          <path d="M20 22c16 4 42 3 56-2l-9 24c-14-4-20-15-47-22z" fill="#fff" opacity=".09" />
          <path d="M17 84c15 9 47 9 63 0l-2 11q-4 6-30 6t-30-6z" fill="#fff" opacity=".12" />
        </g>
      </Icon>
    </div>
  );
}

export default function App() {
  return (
    <div className="relative flex h-[1800px] w-[2880px] flex-col overflow-hidden bg-[#0a0a14] [font-family:Inter,sans-serif]">
      <div className="flex h-[110px] shrink-0 flex-col bg-linear-to-r from-[#2f2e75] via-[#3e479d] via-55% to-[#3e49b0]">
        <MenuBar />
      </div>
      <div className="relative mt-[-60px] flex h-[1576px] shrink-0 flex-col overflow-hidden rounded-[22px] bg-[#cba791] shadow-[0_0_0_1px_#000]">
        <TabStrip />
        <div className="flex h-[162px] shrink-0 flex-col rounded-t-[20px] border-b-2 border-[#b6aba6] bg-[#ecdfd7] pt-[12px]">
          <AddressRow />
          <div className="pt-[9px]">
            <Bookmarks />
          </div>
        </div>
        <Page />
      </div>
      <div className="mt-[-30px] flex h-[204px] flex-col bg-[linear-gradient(to_bottom,rgba(0,0,0,0.6)_30px,rgba(0,0,0,0.35)_80px,transparent_170px),linear-gradient(to_right,#020802_0px,#12240a_250px,#2d4a1c_680px,#456a2e_1440px,#55823c_2160px,#76b053_2880px)] pt-[30px]">
        <Dock />
      </div>
      <DockDefs />
    </div>
  );
}
